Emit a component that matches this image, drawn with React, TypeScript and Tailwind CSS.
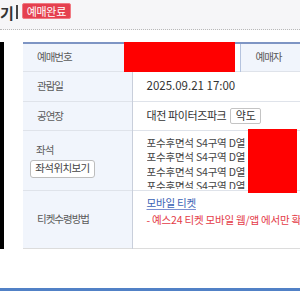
import React from "react";

const font = { fontFamily: '"Noto Sans CJK KR", "Noto Sans", sans-serif' };

const seatLines = [
  "포수후면석 S4구역 D열",
  "포수후면석 S4구역 D열",
  "포수후면석 S4구역 D열",
  "포수후면석 S4구역 D열",
];

export default function App() {
  return (
    <div className="relative h-[300px] w-[300px] overflow-hidden bg-white" style={font}>
      {/* title bar */}
      <div className="flex h-[30px] items-center border-b border-dotted border-[#b9b9b9] bg-[#f6f6f8]">
        <span className="-mt-[5px] text-[15px] font-bold leading-none text-[#333]">기</span>
        <span className="-mt-[5px] ml-[2px] h-[14px] w-[2px] bg-[#444]" />
        <span className="-mt-[7px] ml-[4px] flex h-[16px] w-[49px] items-center justify-center rounded-[2px] border border-[#f07a83] bg-[#e5404f] text-[11px] leading-none tracking-[-0.3px] text-white">
          예매완료
        </span>
      </div>

      <div className="flex pt-[12px]">
        <div className="h-[207px] w-[4px] shrink-0 bg-black" />

        <div className="ml-[19px] shrink-0">
          <table className="w-[520px] table-fixed border-collapse border-t-2 border-[#7e95c4] text-[10.5px] tracking-[-1px]">
            <colgroup>
              <col className="w-[109px]" />
              <col className="w-[108px]" />
              <col className="w-[109px]" />
              <col />
            </colgroup>
            <tbody>
              <tr className="h-[28px] border-b border-[#dfe3ea]">
                <th className="bg-[#f1f5fc] pl-[14px] text-left font-normal text-[#5a5a5a]">예매번호</th>
                <td className="border-l border-[#c9cfdb]" />
                <th className="border-l border-[#b5c3de] bg-[#f1f5fc] pl-[15px] text-left font-normal text-[#5a5a5a]">
                  예매자
                </th>
                <td className="border-l border-[#c9cfdb]" />
              </tr>
              <tr className="h-[30px] border-b border-[#dfe3ea]">
                <th className="bg-[#f1f5fc] pl-[14px] text-left font-normal text-[#5a5a5a]">관람일</th>
                <td
                  colSpan={3}
                  className="border-l border-[#c9cfdb] pl-[14px] text-[11.5px] tracking-normal text-[#333]"
                >
                  2025.09.21 17:00
                </td>
              </tr>
              <tr className="h-[29px] border-b border-[#dfe3ea]">
                <th className="bg-[#f1f5fc] pl-[14px] text-left font-normal text-[#5a5a5a]">공연장</th>
                <td colSpan={3} className="border-l border-[#c9cfdb] pl-[14px] text-[#333]">
                  <div className="flex items-center gap-[4px]">
                    <span className="text-[11px] tracking-[-0.4px]">대전 파이터즈파크</span>
                    <button className="flex h-[16px] w-[31px] items-center justify-center rounded-[2px] border border-[#c4c4c4] bg-white text-[11px] leading-none tracking-normal text-[#333]">
                      약도
                    </button>
                  </div>
                </td>
              </tr>
              <tr className="h-[60px] border-b border-[#dfe3ea]">
                <th className="bg-[#f1f5fc] pl-[7px] text-left font-normal text-[#5a5a5a]">
                  <div className="pl-[6px] leading-[14px]">좌석</div>
                  <button className="mt-[3px] flex h-[18px] w-[65px] items-center justify-center rounded-[3px] border border-[#bdbdbd] bg-white text-[10.5px] leading-none tracking-[-0.6px] text-[#444]">
                    좌석위치보기
                  </button>
                </th>
                <td colSpan={3} className="border-l border-[#c9cfdb] pl-[14px] align-top">
                  <div className="mt-[5px] h-[53px] overflow-hidden text-[10.5px] leading-[14.5px] tracking-[-0.2px] text-[#444]">
                    {seatLines.map((line, i) => (
                      <div key={i} className="whitespace-nowrap">
                        {line}
                      </div>
                    ))}
                  </div>
                </td>
              </tr>
              <tr className="h-[58px] border-b border-[#dcdcdc]">
                <th className="bg-[#f1f5fc] pl-[14px] text-left font-normal text-[#5a5a5a]">티켓수령방법</th>
                <td colSpan={3} className="border-l border-[#c9cfdb] pl-[14px] align-top">
                  <div className="pt-[3px] text-[10.5px] leading-[17px] tracking-[-0.2px]">
                    <div>
                      <span className="text-[#3b63b5] underline decoration-[#7b8fd0] underline-offset-2">
                        모바일 티켓
                      </span>
                    </div>
                    <div className="whitespace-nowrap text-[#e43b47]">
                      - 예스24 티켓 모바일 웹/앱 에서만 확인 가능합니다.
                    </div>
                  </div>
                </td>
              </tr>
            </tbody>
          </table>
        </div>
      </div>

      <div className="mt-[39px] h-[3px] w-full bg-[#5181c6]" />

      {/* redaction boxes */}
      <div className="absolute left-[124px] top-[42px] h-[30px] w-[111px] bg-[#ff0000]" />
      <div className="absolute left-[248px] top-[129px] h-[64px] w-[49px] bg-[#ff0000]" />
    </div>
  );
}
